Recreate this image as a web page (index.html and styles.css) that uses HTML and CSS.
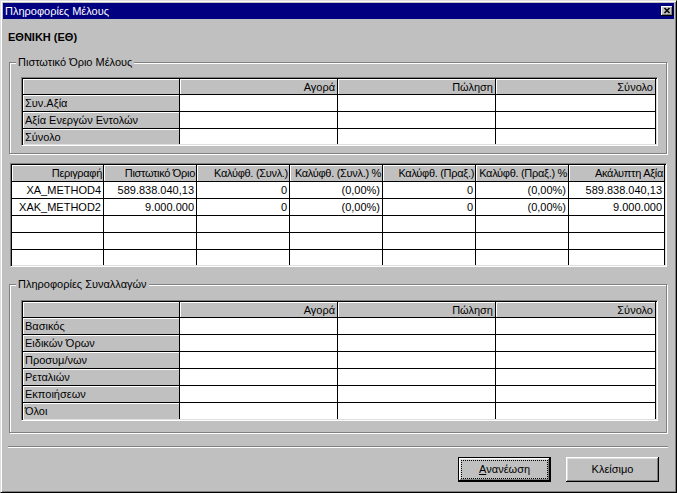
FILE: index.html
```html
<!DOCTYPE html>
<html lang="el">
<head>
<meta charset="utf-8">
<title>Πληροφορίες Μέλους</title>
<link rel="stylesheet" href="styles.css">
</head>
<body>
<div class="window">
  <div class="titlebar">
    <span class="title">Πληροφορίες Μέλους</span>
    <span class="close-btn"><svg width="8" height="7" viewBox="0 0 8 7"><path d="M1.5 1 L6.5 6 M6.5 1 L1.5 6" stroke="#000" stroke-width="1.6" fill="none"/></svg></span>
  </div>
  <div class="client">
    <div class="member-name">ΕΘΝΙΚΗ (ΕΘ)</div>

    <div class="group group-credit">
      <div class="group-title">Πιστωτικό Όριο Μέλους</div>
      <div class="sunken table-wrap">
        <div class="grid grid-4 rows-credit">
          <div class="fixed"></div><div class="fixed">Αγορά</div><div class="fixed">Πώληση</div><div class="fixed">Σύνολο</div>
          <div class="fixed left">Συν.Αξία</div><div class="cell"></div><div class="cell"></div><div class="cell"></div>
          <div class="fixed left">Αξία Ενεργών Εντολών</div><div class="cell"></div><div class="cell"></div><div class="cell"></div>
          <div class="fixed left">Σύνολο</div><div class="cell"></div><div class="cell"></div><div class="cell"></div>
        </div>
      </div>
    </div>

    <div class="sunken main-wrap">
      <div class="grid grid-7">
        <div class="fixed">Περιγραφή</div><div class="fixed">Πιστωτικό Όριο</div><div class="fixed">Καλύφθ. (Συνλ.)</div><div class="fixed">Καλύφθ. (Συνλ.) %</div><div class="fixed">Καλύφθ. (Πραξ.)</div><div class="fixed">Καλύφθ. (Πραξ.) %</div><div class="fixed">Ακάλυπτη Αξία</div>
        <div class="cell">XA_METHOD4</div><div class="cell">589.838.040,13</div><div class="cell">0</div><div class="cell">(0,00%)</div><div class="cell">0</div><div class="cell">(0,00%)</div><div class="cell">589.838.040,13</div>
        <div class="cell">XAK_METHOD2</div><div class="cell">9.000.000</div><div class="cell">0</div><div class="cell">(0,00%)</div><div class="cell">0</div><div class="cell">(0,00%)</div><div class="cell">9.000.000</div>
        <div class="cell"></div><div class="cell"></div><div class="cell"></div><div class="cell"></div><div class="cell"></div><div class="cell"></div><div class="cell"></div>
        <div class="cell"></div><div class="cell"></div><div class="cell"></div><div class="cell"></div><div class="cell"></div><div class="cell"></div><div class="cell"></div>
        <div class="cell"></div><div class="cell"></div><div class="cell"></div><div class="cell"></div><div class="cell"></div><div class="cell"></div><div class="cell"></div>
      </div>
    </div>

    <div class="group group-trades">
      <div class="group-title">Πληροφορίες Συναλλαγών</div>
      <div class="sunken table-wrap trades-wrap">
        <div class="grid grid-4 rows-trades">
          <div class="fixed"></div><div class="fixed">Αγορά</div><div class="fixed">Πώληση</div><div class="fixed">Σύνολο</div>
          <div class="fixed left">Βασικός</div><div class="cell"></div><div class="cell"></div><div class="cell"></div>
          <div class="fixed left">Ειδικών Όρων</div><div class="cell"></div><div class="cell"></div><div class="cell"></div>
          <div class="fixed left">Προσυμ/νων</div><div class="cell"></div><div class="cell"></div><div class="cell"></div>
          <div class="fixed left">Ρεταλιών</div><div class="cell"></div><div class="cell"></div><div class="cell"></div>
          <div class="fixed left">Εκποιήσεων</div><div class="cell"></div><div class="cell"></div><div class="cell"></div>
          <div class="fixed left">Όλοι</div><div class="cell"></div><div class="cell"></div><div class="cell"></div>
        </div>
      </div>
    </div>

    <div class="separator"></div>

    <div class="button-row">
      <button class="btn btn-default"><span class="focus"><u>Α</u>νανέωση</span></button>
      <button class="btn"><span class="label">Κλείσιμο</span></button>
    </div>
  </div>
</div>
</body>
</html>
```

FILE: styles.css
```css
* { box-sizing: border-box; }
html, body { margin: 0; padding: 0; }
body {
  width: 677px;
  height: 493px;
  overflow: hidden;
  background: #c0c0c0;
  font-family: "Liberation Sans", Arial, sans-serif;
  font-size: 11px;
  color: #000;
}
.window {
  width: 677px;
  height: 493px;
  border: 1px solid;
  border-color: #dfdfdf #000 #000 #dfdfdf;
  box-shadow: inset 1px 1px #fff, inset -1px -1px #808080;
  padding: 2px;
  background: #c0c0c0;
  display: flex;
  flex-direction: column;
}
.titlebar {
  height: 16px;
  flex: none;
  background: #000080;
  display: flex;
  align-items: center;
  justify-content: space-between;
  padding: 0 1px 0 2px;
}
.title {
  color: #fff;
  line-height: 16px;
  white-space: nowrap;
}
.close-btn {
  width: 12px;
  height: 10px;
  background: #c0c0c0;
  box-shadow: inset -1px -1px #000, inset 1px 1px #fff, inset -2px -2px #808080;
  display: flex;
  align-items: center;
  justify-content: center;
  padding: 0 1px 1px 0;
}
.close-btn svg { display: block; }
.client {
  flex: 1;
  padding: 12px 0 0 5px;
}
.member-name {
  font-weight: bold;
  line-height: 13px;
  height: 13px;
  white-space: nowrap;
}
.group {
  width: 658px;
  margin-left: 1px;
  border: 1px solid #808080;
  box-shadow: inset 1px 1px #fff, 1px 1px #fff;
}
.group-credit { margin-top: 18px; height: 92px; }
.group-trades { margin-top: 17px; height: 149px; }
.group-title {
  width: fit-content;
  margin: -7px 0 0 6px;
  padding: 0 2px;
  background: #c0c0c0;
  line-height: 13px;
  white-space: nowrap;
}
.sunken {
  border: 1px solid;
  border-color: #808080 #fff #fff #808080;
  padding: 1px;
  box-shadow: inset 1px 1px #000, inset -1px -1px #dfdfdf;
}
.table-wrap {
  width: 637px;
  margin: 8px 0 0 11px;
}
.trades-wrap { margin-top: 9px; }
.main-wrap {
  width: 657px;
  margin: 9px 0 0 2px;
}
.grid {
  display: grid;
  overflow: hidden;
  background: #fff;
}
.grid-4 {
  grid-template-columns: 157px 158px 158px 160px;
  grid-template-rows: 16px;
  grid-auto-rows: 17px;
}
.rows-credit { height: 65px; }
.rows-trades { height: 117px; }
.grid-7 {
  grid-template-columns: 92px 93px 93px 93px 93px 93px 96px;
  grid-auto-rows: 17px;
  height: 100px;
}
.grid > div {
  border-right: 1px solid;
  border-bottom: 1px solid;
  line-height: 16px;
  padding: 0 2px;
  text-align: right;
  white-space: nowrap;
  overflow: hidden;
}
.cell {
  background: #fff;
  border-color: #c0c0c0;
}
.fixed {
  background: #c0c0c0;
  border-color: #000;
  box-shadow: inset 1px 1px #fff;
}
.grid-7 > .fixed {
  letter-spacing: -0.3px;
  padding-right: 1px;
}
.grid > .left { text-align: left; }
.separator {
  width: 660px;
  height: 2px;
  margin-top: 13px;
  border-top: 1px solid #808080;
  border-bottom: 1px solid #fff;
}
.button-row {
  width: 660px;
  margin-top: 9px;
  padding-right: 9px;
  display: flex;
  justify-content: flex-end;
  gap: 15px;
}
.btn {
  width: 93px;
  height: 25px;
  margin: 0;
  padding: 3px;
  border: none;
  background: #c0c0c0;
  font-family: "Liberation Sans", Arial, sans-serif;
  font-size: 11px;
  color: #000;
  box-shadow: inset -1px -1px #000, inset 1px 1px #fff, inset -2px -2px #808080, inset 2px 2px #dfdfdf;
  display: flex;
}
.btn-default {
  border: 1px solid #000;
  padding: 2px;
}
.btn .focus,
.btn .label {
  flex: 1;
  display: flex;
  align-items: center;
  justify-content: center;
  line-height: 13px;
}
.btn .focus { border: 1px dotted #000; }
.btn u { text-decoration: underline; }
```
